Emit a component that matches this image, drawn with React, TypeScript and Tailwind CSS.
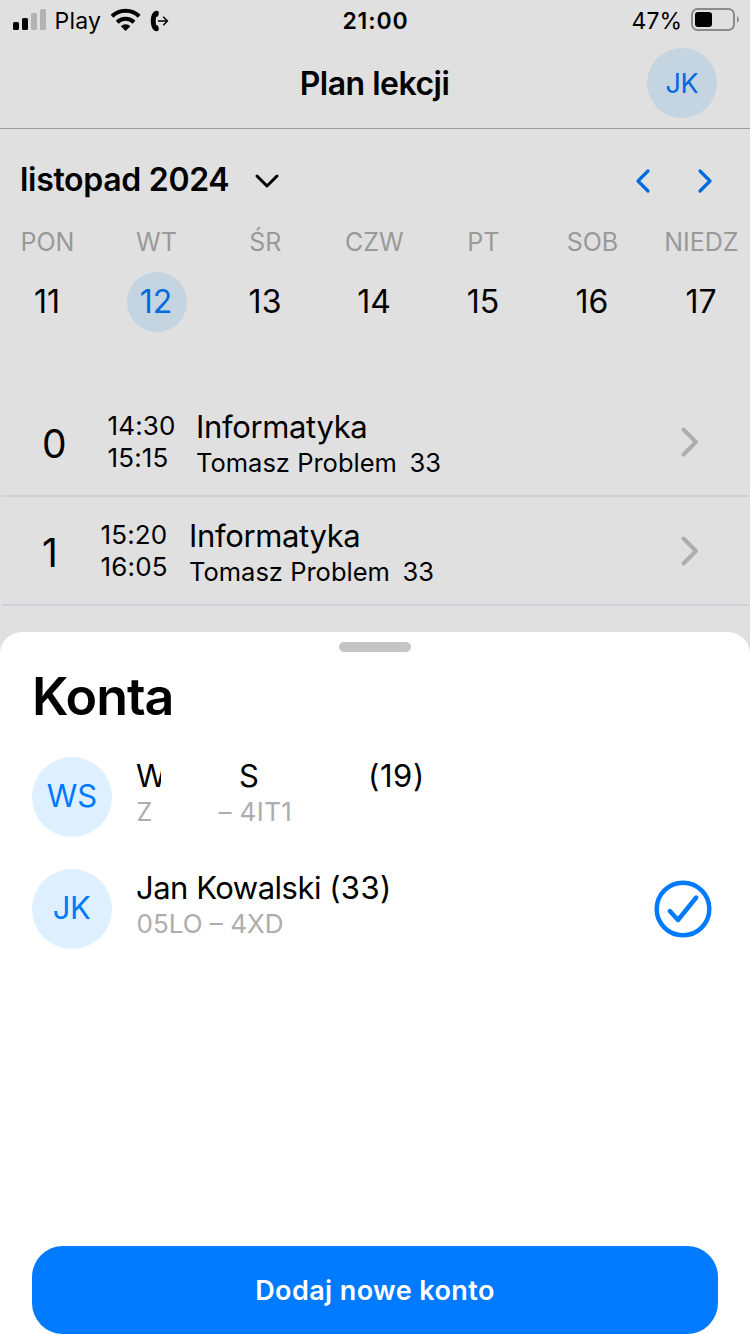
import React from "react";

const days = [
  { name: "PON", num: "11", w: "w-[94px]" },
  { name: "WT", num: "12", w: "w-[124px]", active: true },
  { name: "ŚR", num: "13", w: "w-[94px]" },
  { name: "CZW", num: "14", w: "w-[124px]" },
  { name: "PT", num: "15", w: "w-[94px]" },
  { name: "SOB", num: "16", w: "w-[124px]" },
  { name: "NIEDZ", num: "17", w: "w-[94px]" },
];

function StatusBar() {
  return (
    <div className="flex h-[40px] items-start pt-[1px] text-[23px] leading-[40px]">
      <div className="flex w-[250px] items-center pl-[12px]">
        <svg width="36" height="24" viewBox="0 0 36 24" className="mt-[-2px]">
          <rect x="1" y="14" width="6" height="8" rx="1.6" />
          <rect x="10" y="10" width="6" height="12" rx="1.6" />
          <rect x="19" y="5" width="6" height="17" rx="1.6" fill="#b3b3b3" />
          <rect x="28" y="1" width="6" height="21" rx="1.6" fill="#b3b3b3" />
        </svg>
        <span className="ml-[6.5px] w-[55.5px] tracking-[0.2px]">Play</span>
        <svg width="32" height="24" viewBox="0 0 32 24" className="mt-[-2px]">
          <g fill="none" stroke="#000" strokeWidth="4">
            <path d="M2 8.3 A19.5 19.5 0 0 1 29.200 8.300" />
            <path d="M7.200 14.200 A12 12 0 0 1 24 14.200" />
          </g>
          <path d="M15.600 23 L10.800 18.200 A7 7 0 0 1 20.400 18.200 Z" />
        </svg>
        <svg width="20" height="22" viewBox="0 0 20 22" className="ml-[8px]">
          <path d="M6 0.800 C2.500 1.500 0.800 6 0.800 11 C0.800 16 2.500 20.500 6 21.200 C7.800 21.500 8.800 20.600 8.800 19 L8.400 16.800 C8 15.300 7 15 6.200 15.200 C5.600 13 5.600 9 6.200 6.800 C7 7 8 6.700 8.400 5.200 L8.800 3 C8.800 1.400 7.800 0.500 6 0.800 Z" />
          <path d="M8 11 H17.200 M13.200 6.800 L17.400 11 L13.200 15.200" fill="none" stroke="#000" strokeWidth="1.500" />
        </svg>
      </div>
      <div className="w-[250px] pl-[1px] text-center font-semibold tracking-[0.9px]">21:00</div>
      <div className="flex w-[250px] items-center justify-end pr-[11px]">
        <span className="mr-[9px]">47%</span>
        <svg width="48" height="23" viewBox="0 0 48 23" className="mt-[-3px]">
          <rect x="1" y="1" width="42" height="21" rx="5.500" fill="none" stroke="#8a8a8a" strokeWidth="2" />
          <rect x="4" y="4" width="17" height="15" rx="3" />
          <path d="M46 8 Q48 9.500 48 11.500 Q48 13.500 46 15 Z" fill="#8a8a8a" />
        </svg>
      </div>
    </div>
  );
}

function Chevron() {
  return (
    <svg width="20" height="32" viewBox="0 0 20 32" fill="none" stroke="#adadae" strokeWidth="4" strokeLinecap="round" strokeLinejoin="round">
      <path d="M3.500 3.500 L16 16 L3.500 28.500" />
    </svg>
  );
}

function Lesson({ no, from, to, noW }: { no: string; from: string; to: string; noW: string }) {
  return (
    <div className="ml-[2px] flex h-[109px] border-b-2 border-[#d1d1d6] pl-[40px]">
      <span className={`text-[39px] leading-[112px] ${noW}`}>{no}</span>
      <div className="w-[89px] pt-[22px] pl-[0.5px] text-[26px] leading-[32px] tracking-[0.15px]">
        <div>{from}</div>
        <div>{to}</div>
      </div>
      <div className="flex-1 pt-[19px]">
        <div className="text-[31px] leading-[40px] tracking-[-0.35px]">Informatyka</div>
        <div className="flex gap-[12.5px] text-[25.5px] leading-[32px]">
          <span>Tomasz Problem</span>
          <span>33</span>
        </div>
      </div>
      <div className="mr-[50px] flex items-center">
        <Chevron />
      </div>
    </div>
  );
}

export default function App() {
  return (
    <div className="flex h-[1334px] w-[750px] flex-col overflow-hidden bg-[#e0e0e0] font-['Inter',sans-serif] text-black">
      <StatusBar />
      <header className="flex h-[89px] border-b border-[#9b9b9b]">
        <div className="w-[250px]" />
        <h1 className="w-[249px] text-center text-[32px] leading-[88px] font-semibold tracking-[-0.5px]">Plan lekcji</h1>
        <div className="flex w-[251px] justify-end pt-[8px] pr-[33px]">
          <div className="h-[70px] w-[70px] rounded-full bg-[#c4d4e1] text-center text-[27px] leading-[71px] tracking-[-0.4px] text-[#006be0]">JK</div>
        </div>
      </header>
      <div className="flex h-[92px] items-center pl-[20px] font-semibold">
        <span className="mb-[-10px] w-[234px] text-[32px] leading-[92px] tracking-[-0.3px]">listopad 2024</span>
        <svg width="26" height="16" viewBox="0 0 26 16" className="mt-[12px]" fill="none" stroke="#000" strokeWidth="3" strokeLinecap="round" strokeLinejoin="round">
          <path d="M3 3 L13 13 L23 3" />
        </svg>
        <div className="mt-[12px] ml-auto flex gap-[44px] pr-[36px]">
          <svg width="18" height="26" viewBox="0 0 18 26" fill="none" stroke="#006be0" strokeWidth="3.200" strokeLinecap="round" strokeLinejoin="round">
            <path d="M14 3 L4 13 L14 23" />
          </svg>
          <svg width="18" height="26" viewBox="0 0 18 26" fill="none" stroke="#006be0" strokeWidth="3.200" strokeLinecap="round" strokeLinejoin="round">
            <path d="M4 3 L14 13 L4 23" />
          </svg>
        </div>
      </div>
      <div className="flex h-[167px] pt-[1px]">
        {days.map((d) => (
          <div key={d.name} className={`flex shrink-0 flex-col items-center ${d.w}`}>
            <span className="pl-[0.8px] text-[25px] leading-[40px] text-[#999999]">{d.name}</span>
            <span
              className={`mt-[10px] h-[60px] w-[60px] rounded-full text-center text-[32px] leading-[60px] ${d.active ? "ml-[2px] bg-[#c4d4e1] pr-[2px] text-[#006be0]" : ""}`}
            >
              {d.num}
            </span>
          </div>
        ))}
      </div>
      <Lesson no="0" from="14:30" to="15:15" noW="w-[65px]" />
      <Lesson no="1" from="15:20" to="16:05" noW="w-[58px]" />
      <div className="h-[26px] shrink-0" />
      <section className="flex flex-1 flex-col rounded-t-[22px] bg-white px-8">
        <div className="mx-auto mt-[10px] h-[10px] w-[72px] shrink-0 rounded-full bg-[#c5c5c7]" />
        <h2 className="mt-[4px] text-[52px] leading-[81px] font-semibold tracking-[-1px]">Konta</h2>
        <div className="mt-[20px] flex h-[80px]">
          <div className="h-[80px] w-[80px] rounded-full bg-[#def0ff] text-center text-[31px] leading-[78px] text-[#007aff]">WS</div>
          <div className="ml-[24px]">
            <div className="flex text-[31px] leading-[38px]">
              <span className="w-[25px] overflow-hidden">W</span>
              <span className="ml-[78px] w-[129px]">S</span>
              <span className="tracking-[0.6px]">(19)</span>
            </div>
            <div className="flex pl-[0.5px] text-[26px] leading-[34px] text-[#adadad]">
              <span className="w-[82px] text-[25px]">Z</span>
              <span className="tracking-[0.4px]">– 4IT1</span>
            </div>
          </div>
        </div>
        <div className="mt-[32px] flex h-[80px]">
          <div className="h-[80px] w-[80px] rounded-full bg-[#def0ff] pr-[1px] text-center text-[31px] leading-[78px] tracking-[-0.4px] text-[#007aff]">JK</div>
          <div className="ml-[24px]">
            <div className="text-[31px] leading-[38px]">
              <span className="tracking-[-0.5px]">Jan Kowalski </span>
              <span className="tracking-[0.4px]">(33)</span>
            </div>
            <div className="pl-[0.5px] text-[26px] leading-[34px] text-[#adadad]">05LO – 4XD</div>
          </div>
          <svg width="58" height="58" viewBox="0 0 58 58" className="mt-[11px] mr-[6px] ml-auto" fill="none" stroke="#007aff" strokeLinecap="round" strokeLinejoin="round">
            <circle cx="29" cy="29" r="26.300" strokeWidth="4.500" />
            <path d="M15.800 31 L24 40 L42.200 17.500" strokeWidth="4.400" />
          </svg>
        </div>
        <button className="mt-auto h-[88px] rounded-[31px] bg-[#007aff] pt-[1px] text-[27px] leading-[87px] font-semibold tracking-[0.4px] text-white">
          Dodaj nowe konto
        </button>
      </section>
    </div>
  );
}
